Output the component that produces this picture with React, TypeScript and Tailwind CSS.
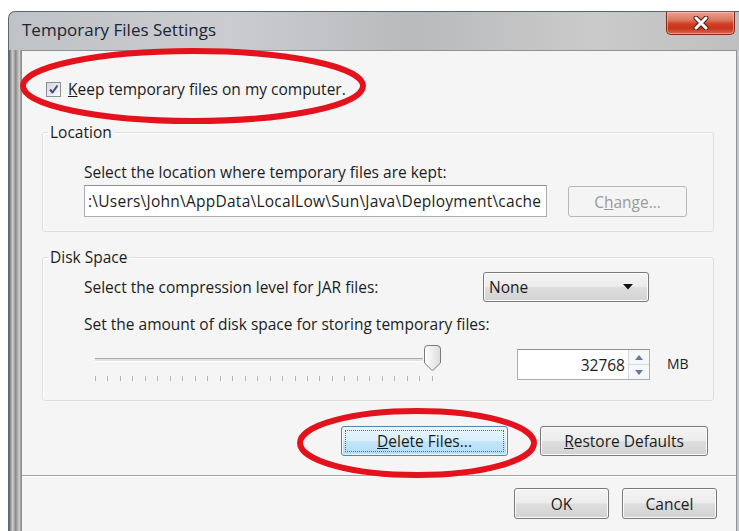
import React from "react";

type BtnProps = {
  children: React.ReactNode;
  className?: string;
  focused?: boolean;
  disabled?: boolean;
};

// Aero-style push button
function Button({ children, className = "", focused = false, disabled = false }: BtnProps) {
  if (disabled) {
    return (
      <div className={`flex items-center justify-center rounded-[3px] border border-[#b5b9bc] bg-[#f4f4f4] text-[#9a9a9a] ${className}`}>
        {children}
      </div>
    );
  }
  if (focused) {
    return (
      <div className={`flex items-center justify-center rounded-[3px] border border-[#4c86b6] bg-[linear-gradient(180deg,#eaf6fd_0%,#d9f0fc_48%,#c4e5f8_52%,#b3dcf4_100%)] p-[3px] shadow-[inset_0_0_0_1px_#f4fbff] ${className}`}>
        <div className="flex h-full w-full items-center justify-center border border-dotted border-[#5a6a7a]">{children}</div>
      </div>
    );
  }
  return (
    <div className={`flex items-center justify-center rounded-[3px] border border-[#7a7a7a] bg-[linear-gradient(180deg,#f4f4f4_0%,#ececec_48%,#dedede_52%,#d2d2d2_100%)] shadow-[inset_0_0_0_1px_#fbfbfb] ${className}`}>
      {children}
    </div>
  );
}

function Checkbox() {
  return (
    <span className="flex h-[15px] w-[15px] items-center justify-center border border-[#8e8f8f] bg-[linear-gradient(135deg,#d6d6d6,#fbfbfb)] p-[1px]">
      <svg width="11" height="11" viewBox="0 0 11 11">
        <path d="M2 5.5 L4.5 8.5 L9.5 1.5" fill="none" stroke="#3a4d86" strokeWidth="2" strokeLinejoin="round" />
      </svg>
    </span>
  );
}

function CloseButton() {
  return (
    <div className="mr-[4px] flex h-[23px] w-[69px] items-center justify-center rounded-b-[5px] border border-t-0 border-[#7d2a1c] bg-[linear-gradient(180deg,#e8a08e_0%,#dd7a62_35%,#cf3e24_55%,#c8341c_75%,#d86a4c_100%)] shadow-[inset_0_0_0_1px_rgba(255,210,200,0.5)]">
      <svg width="18" height="14" viewBox="0 0 18 14">
        <path d="M4 2 L14 12 M14 2 L4 12" stroke="#5a1a10" strokeWidth="5" strokeLinecap="round" />
        <path d="M4 2 L14 12 M14 2 L4 12" stroke="#ffffff" strokeWidth="3" strokeLinecap="round" />
      </svg>
    </div>
  );
}

function SliderThumb() {
  return (
    <svg width="19" height="28" viewBox="0 0 19 28" className="shrink-0">
      <defs>
        <linearGradient id="thumbFill" x1="0" y1="0" x2="1" y2="0">
          <stop offset="0" stopColor="#ffffff" />
          <stop offset="1" stopColor="#dcdcdc" />
        </linearGradient>
      </defs>
      <path d="M1.5 5 Q1.5 1.5 5 1.5 H14 Q17.5 1.5 17.5 5 V19 L10.5 25.8 Q9.5 26.7 8.5 25.8 L1.5 19 Z" fill="url(#thumbFill)" stroke="#7b7b7b" />
    </svg>
  );
}

const ticks = Array.from({ length: 28 });

export default function App() {
  return (
    <div className="relative h-[531px] w-[739px] overflow-hidden bg-white pl-[8px] pt-[11px] font-['Open_Sans','Noto_Sans',sans-serif] text-[15.5px] leading-[20px] text-[#1c1c1c]">
      <div className="flex h-[520px] w-[731px] flex-col rounded-tl-[7px] border-l border-t border-[#5d6670] bg-[linear-gradient(90deg,#bfc2c6_0%,#cbcccf_30%,#b9babc_55%,#cacaca_80%,#bfbfbf_100%)]">
        {/* title bar */}
        <div className="flex h-[38px] shrink-0 items-start justify-between">
          <span className="pl-[13px] pt-[7px] text-[17px] leading-[22px] text-[#1b2535]">Temporary Files Settings</span>
          <CloseButton />
        </div>

        <div className="flex flex-1">
          <div className="w-[12px] bg-[linear-gradient(90deg,#5e5e5e_0%,#9a9a9a_15%,#cdcdcd_30%,#8a8a8a_55%,#b8b8b8_75%,#d2d2d2_90%,#7a7a7a_100%)]" />

          {/* client area */}
          <div className="flex w-[716px] flex-col border-x border-t border-[#8c9299] bg-[#f5f5f5]">
            <label className="ml-[24px] mt-[27px] flex h-[22px] items-center gap-[7px]">
              <Checkbox />
              <span>
                <span className="underline">K</span>eep temporary files on my computer.
              </span>
            </label>

            <fieldset className="ml-[20px] mt-[23px] w-[672px] rounded-[3px] border border-[#dcdfe2] pb-[14px] pl-[5px] shadow-[inset_1px_1px_0_#ffffff]">
              <legend className="px-[2px] leading-[18px]">Location</legend>
              <div className="pl-[36px]">
                <div className="mt-[21px]">Select the location where temporary files are kept:</div>
                <div className="mt-[3px] flex items-start">
                  <div className="flex h-[32px] w-[463px] items-center overflow-hidden whitespace-nowrap border border-[#abadb3] border-t-[#8e9297] bg-white pl-[3px] tracking-[0.25px]">
                    {":\\Users\\John\\AppData\\LocalLow\\Sun\\Java\\Deployment\\cache"}
                  </div>
                  <Button disabled className="ml-[21px] mt-[1px] h-[31px] w-[119px]">
                    <span>
                      C<span className="underline">h</span>ange...
                    </span>
                  </Button>
                </div>
              </div>
            </fieldset>

            <fieldset className="ml-[20px] mt-[16px] w-[672px] rounded-[3px] border border-[#dcdfe2] pb-[19px] pl-[5px] shadow-[inset_1px_1px_0_#ffffff]">
              <legend className="px-[2px] leading-[18px]">Disk Space</legend>
              <div className="pl-[36px]">
                <div className="mt-[6px] flex h-[30px] items-center">
                  <span className="w-[399px]">Select the compression level for JAR files:</span>
                  <Button className="h-[30px] w-[166px] !justify-between pl-[5px] pr-[15px]">
                    <span>None</span>
                    <svg width="10" height="6" viewBox="0 0 10 6">
                      <path d="M0 0 H10 L5 5.5 Z" fill="#111111" />
                    </svg>
                  </Button>
                </div>
                <div className="mt-[12px]">Set the amount of disk space for storing temporary files:</div>

                <div className="mt-[10px] flex items-start">
                  {/* slider */}
                  <div className="ml-[11px] flex w-[347px] flex-col">
                    <div className="flex h-[28px] items-start">
                      <div className="mt-[14px] h-[3px] flex-1 border-t border-[#a9a9a9] bg-[#e2e2e2] shadow-[0_1px_0_#ffffff]" />
                      <SliderThumb />
                    </div>
                    <div className="mt-[4px] flex w-[338px] justify-between">
                      {ticks.map((_, i) => (
                        <span key={i} className="h-[5px] w-[1px] bg-[#b7b7b7]" />
                      ))}
                    </div>
                  </div>

                  {/* spinner */}
                  <div className="ml-[75px] mt-[5px] flex h-[31px] w-[133px] border border-[#abadb3] border-t-[#8e9297] bg-white">
                    <span className="flex flex-1 items-center justify-end pr-[3px]">32768</span>
                    <div className="flex w-[21px] flex-col border-l border-[#d6d9dd] bg-[#f6f7f9]">
                      <div className="flex flex-1 items-center justify-center border-b border-[#d6d9dd]">
                        <svg width="8" height="5" viewBox="0 0 8 5">
                          <path d="M0 5 L4 0 L8 5 Z" fill="#5f7ba3" />
                        </svg>
                      </div>
                      <div className="flex flex-1 items-center justify-center">
                        <svg width="8" height="5" viewBox="0 0 8 5">
                          <path d="M0 0 L4 5 L8 0 Z" fill="#5f7ba3" />
                        </svg>
                      </div>
                    </div>
                  </div>
                  <span className="ml-[17px] mt-[10px] text-[14px]">MB</span>
                </div>
              </div>
            </fieldset>

            <div className="mr-[28px] mt-[25px] flex justify-end gap-[32px]">
              <Button focused className="h-[30px] w-[167px]">
                <span>
                  <span className="underline">D</span>elete Files...
                </span>
              </Button>
              <Button className="h-[30px] w-[168px]">
                <span>
                  <span className="underline">R</span>estore Defaults
                </span>
              </Button>
            </div>

            <div className="mt-[19px] h-[2px] border-t border-[#a3a3a3] bg-[#fdfdfd]" />

            <div className="mr-[19px] mt-[11px] flex justify-end gap-[13px]">
              <Button className="h-[31px] w-[95px]">OK</Button>
              <Button className="h-[31px] w-[95px]">Cancel</Button>
            </div>
          </div>

          <div className="w-[2px] bg-[#c9c9c9]" />
        </div>
      </div>

      {/* red marker rings drawn over the dialog */}
      <svg className="pointer-events-none absolute left-0 top-0" width="739" height="531" viewBox="0 0 739 531">
        <ellipse cx="193" cy="86" rx="170" ry="35" fill="none" stroke="#e3121c" strokeWidth="6" />
        <ellipse cx="417" cy="443" rx="117" ry="32" fill="none" stroke="#e3121c" strokeWidth="6" />
      </svg>
    </div>
  );
}
